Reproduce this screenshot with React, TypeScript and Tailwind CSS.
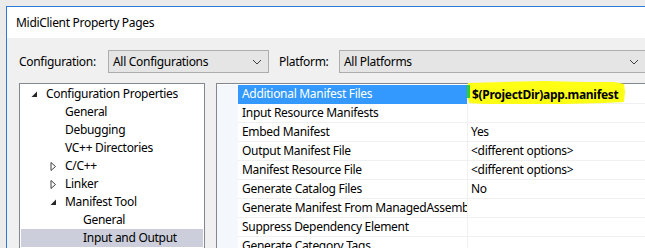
import type { ReactNode } from "react"

const treeItems: { label: string; indent: number; arrow?: "open" | "closed"; selected?: boolean }[] = [
  { label: "Configuration Properties", indent: 0, arrow: "open" },
  { label: "General", indent: 1 },
  { label: "Debugging", indent: 1 },
  { label: "VC++ Directories", indent: 1 },
  { label: "C/C++", indent: 1, arrow: "closed" },
  { label: "Linker", indent: 1, arrow: "closed" },
  { label: "Manifest Tool", indent: 1, arrow: "open" },
  { label: "General", indent: 2 },
  { label: "Input and Output", indent: 2, selected: true },
]

const props: { name: string; value: string }[] = [
  { name: "Additional Manifest Files", value: "" },
  { name: "Input Resource Manifests", value: "" },
  { name: "Embed Manifest", value: "Yes" },
  { name: "Output Manifest File", value: "<different options>" },
  { name: "Manifest Resource File", value: "<different options>" },
  { name: "Generate Catalog Files", value: "No" },
  { name: "Generate Manifest From ManagedAssembly", value: "" },
  { name: "Suppress Dependency Element", value: "" },
  { name: "Generate Category Tags", value: "" },
]

function Chevron() {
  return (
    <svg width="10" height="6" viewBox="0 0 10 6" className="shrink-0">
      <polyline points="1,1 5,5 9,1" fill="none" stroke="#404040" strokeWidth="1" />
    </svg>
  )
}

function Combo({ value, className }: { value: string; className: string }) {
  return (
    <div
      className={`flex h-[23px] shrink-0 items-center justify-between border border-[#adadad] bg-[#e5e5e5] pl-[4px] pr-[6px] ${className}`}
    >
      <span>{value}</span>
      <Chevron />
    </div>
  )
}

function Arrow({ kind }: { kind: "open" | "closed" }) {
  if (kind === "open") {
    return (
      <svg width="7" height="7" viewBox="0 0 7 7">
        <polygon points="6,0.5 6,6 0.5,6" fill="#262626" />
      </svg>
    )
  }
  return (
    <svg width="7" height="9" viewBox="0 0 7 9">
      <polygon points="1,0.5 5.5,4.5 1,8.5" fill="none" stroke="#404040" strokeWidth="1" />
    </svg>
  )
}

function TreeRow({ label, indent, arrow, selected }: (typeof treeItems)[number]) {
  const pad = indent === 0 ? "pl-[10px]" : indent === 1 ? "pl-[29px]" : "pl-[47px]"
  return (
    <div className={`flex h-[18px] items-center whitespace-nowrap ${pad} ${selected ? "bg-[#cccedb]" : ""}`}>
      <span className="flex w-[15px] shrink-0 items-center">{arrow && <Arrow kind={arrow} />}</span>
      <span>{label}</span>
    </div>
  )
}

function Cell({ children, className }: { children?: ReactNode; className: string }) {
  return <div className={`flex items-center overflow-hidden whitespace-nowrap ${className}`}>{children}</div>
}

export default function App() {
  return (
    <div
      className="h-[248px] w-[645px] overflow-hidden bg-[#ebebeb] pl-[6px] pt-[6px] text-[12px] tracking-[-0.3px] text-black"
      style={{ fontFamily: '"Noto Sans", "Open Sans", sans-serif' }}
    >
      <div className="h-full w-[700px] border-l border-t border-[#2b7bd6] bg-[#f0f0f0]">
        {/* title bar */}
        <div className="flex h-[31px] items-center bg-white pl-[9px]">MidiClient Property Pages</div>

        {/* configuration / platform */}
        <div className="flex items-center pl-[12px] pt-[12px]">
          <span className="w-[89px] shrink-0">Configuration:</span>
          <Combo value="All Configurations" className="w-[161px]" />
          <span className="w-[70px] shrink-0 pl-[10px]">Platform:</span>
          <Combo value="All Platforms" className="w-[307px]" />
        </div>

        <div className="flex gap-[11px] pl-[12px] pt-[10px]">
          {/* tree */}
          <div className="h-[170px] w-[186px] shrink-0 border border-[#828790] bg-white px-[1px] pt-[1px]">
            {treeItems.map((t, i) => (
              <TreeRow key={i} {...t} />
            ))}
          </div>

          {/* property grid */}
          <div className="relative h-[170px] w-[480px] shrink-0 border border-[#828790] bg-white pt-[1px]">
            {props.map((p, i) => (
              <div key={i} className="flex h-[19px]">
                <div className="w-[21px] shrink-0 bg-[#f4f7fc]" />
                <Cell
                  className={`w-[229px] shrink-0 border-b pl-[4px] ${
                    i === 0 ? "border-[#3399ff] bg-[#3399ff] text-white" : "border-[#f0f0f0]"
                  }`}
                >
                  {p.name}
                </Cell>
                <Cell className="w-[230px] shrink-0 border-b border-l border-[#f0f0f0] pl-[3px]">{p.value}</Cell>
              </div>
            ))}

            {/* highlighter mark */}
            <svg
              className="absolute left-[247px] top-[-4px]"
              width="166"
              height="26"
              viewBox="0 0 166 26"
            >
              <path
                d="M4 3 L40 2 L80 1 L120 2 L150 2 L160 4 L161 12 L160 22 L140 23 L100 24 L60 24 L20 24 L5 23 L3 14 Z"
                fill="#ffff16"
              />
              <rect x="3" y="5" width="3" height="13" fill="#33cc33" />
            </svg>
            <div className="absolute left-[255px] top-[2px] flex h-[18px] items-center font-bold">
              $(ProjectDir)app.manifest
            </div>
          </div>
        </div>
      </div>
    </div>
  )
}
